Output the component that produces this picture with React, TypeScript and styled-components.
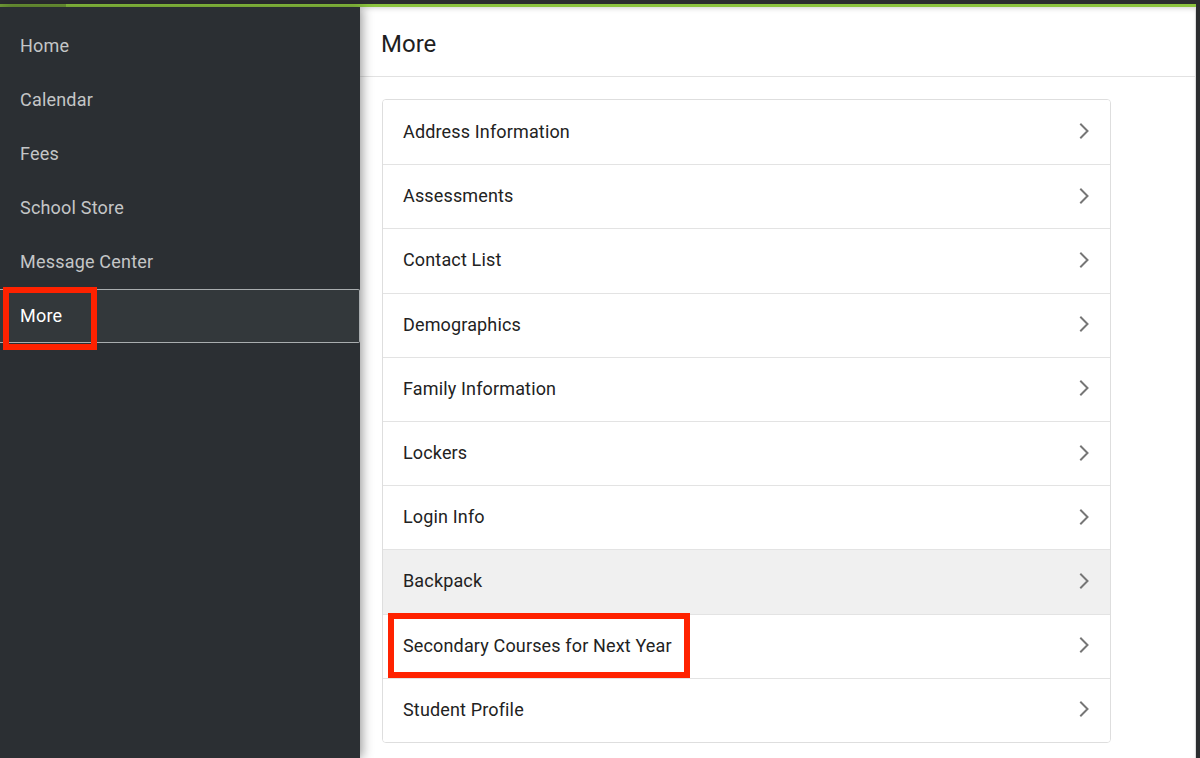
import styled, { createGlobalStyle } from 'styled-components';

const GlobalStyle = createGlobalStyle`
  html, body {
    margin: 0;
    padding: 0;
    height: 100%;
    background: #ffffff;
  }
  body {
    font-family: Roboto, 'Liberation Sans', Arial, sans-serif;
    -webkit-font-smoothing: antialiased;
  }
  #root {
    height: 100%;
  }
`;

const Page = styled.div`
  width: 1200px;
  height: 758px;
  display: flex;
  flex-direction: column;
  overflow: hidden;
  background: #2b2d2f;
`;

const TopStrip = styled.div`
  height: 4px;
  background: #2b2d2f;
  flex-shrink: 0;
`;

const AccentBar = styled.div`
  height: 3px;
  margin-right: 4px;
  display: flex;
  flex-shrink: 0;
  background: #8cc43f;
`;

const AccentLead = styled.div`
  width: 66px;
  background: #6f9a36;
`;

const Body = styled.div`
  flex: 1;
  display: flex;
  min-height: 0;
  padding-right: 4px;
`;

const Sidebar = styled.nav`
  width: 360px;
  flex-shrink: 0;
  background: #2b2f33;
  padding-top: 12px;
  box-shadow: 3px 0 10px rgba(0, 0, 0, 0.35);
  position: relative;
  z-index: 2;
  display: flex;
  flex-direction: column;
`;

const NavItem = styled.div<{ $active?: boolean }>`
  position: relative;
  height: 54px;
  box-sizing: border-box;
  display: flex;
  align-items: center;
  padding: 0 0 2px 20px;
  font-size: 18px;
  letter-spacing: 0.2px;
  color: ${(p) => (p.$active ? '#ffffff' : '#c4c6c7')};
  background: ${(p) => (p.$active ? '#33383b' : 'transparent')};
  border: 1px solid ${(p) => (p.$active ? '#a9adaf' : 'transparent')};
  border-left: none;
  border-radius: 0 2px 2px 0;
`;

const Callout = styled.span<{ $left: number; $top: number; $width: number; $height: number }>`
  position: absolute;
  left: ${(p) => p.$left}px;
  top: ${(p) => p.$top}px;
  width: ${(p) => p.$width}px;
  height: ${(p) => p.$height}px;
  box-sizing: border-box;
  border: 6px solid #ff2200;
  pointer-events: none;
`;

const Main = styled.main`
  flex: 1;
  background: #ffffff;
  display: flex;
  flex-direction: column;
  box-shadow: inset 0 4px 6px -4px rgba(0, 0, 0, 0.25);
  border-right: 1px solid #dcdcdc;
`;

const Header = styled.header`
  height: 70px;
  flex-shrink: 0;
  box-sizing: border-box;
  border-bottom: 1px solid #e2e2e2;
  display: flex;
  align-items: center;
  padding-left: 21px;
  padding-top: 4px;
  font-size: 24px;
  color: #1f1f1f;
`;

const Content = styled.div`
  padding: 22px 0 0 22px;
`;

const Card = styled.div`
  width: 729px;
  box-sizing: border-box;
  border: 1px solid #dedede;
  border-radius: 4px;
  overflow: hidden;
`;

const Row = styled.div<{ $shaded?: boolean }>`
  position: relative;
  height: 64.2px;
  box-sizing: border-box;
  display: flex;
  align-items: center;
  justify-content: space-between;
  padding: 0 20px 2px 20px;
  font-size: 18px;
  letter-spacing: 0.15px;
  color: #222222;
  background: ${(p) => (p.$shaded ? '#f0f0f0' : '#ffffff')};
  border-top: 1px solid #e3e3e3;
  &:first-child {
    border-top: none;
  }
`;

const Chevron = () => (
  <svg width="12" height="16" viewBox="0 0 12 16" fill="none">
    <path d="M3 1.5 L9.5 8 L3 14.5" stroke="#767676" strokeWidth="2" strokeLinecap="square" />
  </svg>
);

const navItems = ['Home', 'Calendar', 'Fees', 'School Store', 'Message Center', 'More'];

const rows = [
  'Address Information',
  'Assessments',
  'Contact List',
  'Demographics',
  'Family Information',
  'Lockers',
  'Login Info',
  'Backpack',
  'Secondary Courses for Next Year',
  'Student Profile',
];

export default function App() {
  return (
    <>
      <GlobalStyle />
      <Page>
        <TopStrip />
        <AccentBar>
          <AccentLead />
        </AccentBar>
        <Body>
          <Sidebar>
            {navItems.map((item) => (
              <NavItem key={item} $active={item === 'More'}>
                {item}
                {item === 'More' && <Callout $left={3} $top={-3} $width={94} $height={63} />}
              </NavItem>
            ))}
          </Sidebar>
          <Main>
            <Header>More</Header>
            <Content>
              <Card>
                {rows.map((label) => (
                  <Row key={label} $shaded={label === 'Backpack'}>
                    {label}
                    <Chevron />
                    {label === 'Secondary Courses for Next Year' && (
                      <Callout $left={5} $top={-2} $width={302} $height={65} />
                    )}
                  </Row>
                ))}
              </Card>
            </Content>
          </Main>
        </Body>
      </Page>
    </>
  );
}
